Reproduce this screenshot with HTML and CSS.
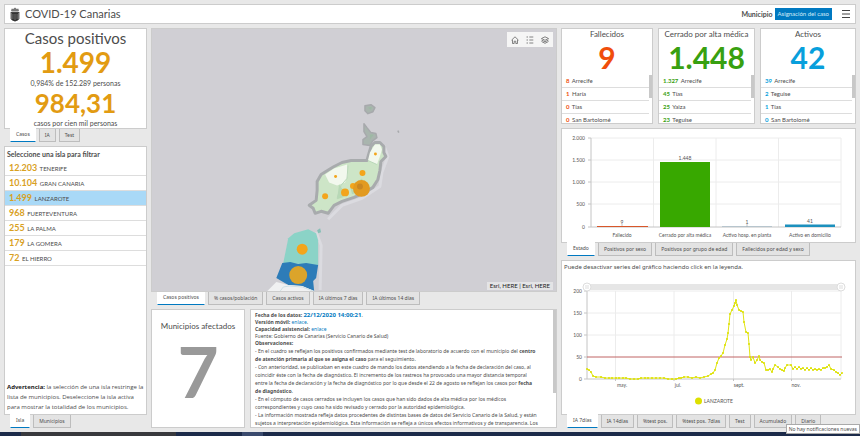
FILE: index.html
```html
<!DOCTYPE html>
<html lang="es">
<head>
<meta charset="utf-8">
<meta name="viewport" content="width=device-width, initial-scale=1">
<title>COVID-19 Canarias</title>
<link rel="stylesheet" href="styles.css">
</head>
<body>
<div class="app">
  <header class="header">
    <svg class="logo" viewBox="0 0 10 15" aria-hidden="true">
      <path d="M1 3.6 1.8 1.6 3.2 2 5 .4 6.8 2 8.2 1.6 9 3.6 8.3 4.4H1.7Z" fill="#777"/>
      <path d="M.6 5h8.8v1H.6z" fill="#444"/>
      <path d="M1.3 6h7.4v6.3Q8.500 13.800 5 14.600 1.500 13.800 1.300 12.300Z" fill="#333"/>
      <path d="M2.900 7v5M5 7v6M7.100 7v5" stroke="#888" stroke-width=".7"/>
      <path d="M.6 6v6M9.400 6v6" stroke="#777" stroke-width=".6"/>
    </svg>
    <h1>COVID-19 Canarias</h1>
    <span class="filter-label">Municipio</span>
    <button class="filter">Asignación del caso</button>
    <button class="menu" aria-label="Menú">
      <svg viewBox="0 0 8 8"><path d="M0 .5h8M0 4h8M0 7.500h8" stroke="#444" stroke-width="1"/></svg>
    </button>
  </header>

  <main class="columns">
    <div class="column">
      <section>
        <div class="card cases">
          <h2>Casos positivos</h2>
          <strong class="total">1.499</strong>
          <p>0,984% de 152.289 personas</p>
          <strong class="rate">984,31</strong>
          <p>casos por cien mil personas</p>
        </div>
        <nav class="tabs"><button class="active">Casos</button><button>IA</button><button>Test</button></nav>
      </section>
      <section class="grow">
        <div class="card islands">
          <h3>Seleccione una isla para filtrar</h3>
          <ul>
            <li><b>12.203</b> TENERIFE</li>
            <li><b>10.104</b> GRAN CANARIA</li>
            <li class="selected"><b>1.499</b> LANZAROTE</li>
            <li><b>968</b> FUERTEVENTURA</li>
            <li><b>255</b> LA PALMA</li>
            <li><b>179</b> LA GOMERA</li>
            <li><b>72</b> EL HIERRO</li>
          </ul>
          <p class="warning"><b>Advertencia:</b> la selección de una isla restringe la<br>lista de municipios. Deseleccione la isla activa<br>para mostrar la totalidad de los municipios.</p>
        </div>
        <nav class="tabs"><button class="active">Isla</button><button>Municipios</button></nav>
      </section>
    </div>

    <div class="column">
      <section class="grow">
        <div class="map">
          <svg class="map-canvas" viewBox="151 28 406 263" preserveAspectRatio="xMidYMax slice" role="img" aria-label="Mapa de casos por municipio">
            <g fill="none" stroke="#dbdbe0" stroke-width="3" stroke-linejoin="round">
              <path d="M384 145 388 156 382 172 380 186 362 198 342 205 328 219M316 232 321 245 320 290"/>
            </g>
            <g fill="#a9b5ae" stroke="#a7a9ac" stroke-width="1.500" stroke-linejoin="round">
              <path d="M365 105 371 104 375 107 373 111 368 113 365 110Z"/>
              <path d="M364 123 367 127 371 132 376 133 377 137 373 140 370 145 363 144 363 139 367 136 364 131Z"/>
              <path d="M398 130 399 132"/>
            </g>
            <path d="M368 107 372 106 371 109ZM370 134 374 134 370 139Z" fill="#9db9a4"/>
            <path d="M375 142 380 142 384 146 384 152 386 156 381 161 380 170 378 179 373 187 363 193 354 197 342 201 334 205 328 213 321 211 315 213 313 208 309 205 316 200 317 190 317 181 321 174 329 169 334 166 342 162 351 160 360 160 367 160 369 153 371 146Z" fill="#cde5c7" stroke="#a8abad" stroke-width="3" stroke-linejoin="round"/>
            <path d="M375 144 380 144 382 149 380 156 377 164 368 160 370 152ZM325 174 334 168 347 164 348 174 345 182 337 185 329 182Z" fill="#f2f8ee"/>
            <path d="M339 184 345 192 343 197 337 199ZM350 186 362 178 367 189 352 194Z" fill="#b7d9b5"/>
            <path d="M348 165 347 178 341 185 337 198M377 164 368 160" fill="none" stroke="#b9d7b9" stroke-width="1"/>
            <path d="M317 230 320 228 321 232 318 233Z" fill="#87bfb6"/>
            <path d="M288 238 294 233 308 229 316 233 318 240 318 265 283 263Z" fill="#8bd3c7"/>
            <path d="M282 263 290 262 298 264 306 263 318 265 316 278 313 281 314 291 302 286 288 285 276 278Z" fill="#2d7cb8"/>
            <path d="M267 291 276 282 288 285 302 286 314 291Z" fill="#f0f1f2"/>
            <path d="M280 291 283 287 289 286 302 287 313 291" fill="none" stroke="#cfe0e4" stroke-width="1"/>
            <g fill="#f3a51c">
              <circle cx="375.500" cy="153.500" r="1.500"/><circle cx="335.500" cy="176" r="1.500"/>
              <circle cx="362.500" cy="172.500" r="3"/><circle cx="325" cy="196" r="3"/>
              <circle cx="345" cy="192" r="4"/><circle cx="353" cy="185.500" r="3"/>
              <circle cx="361.500" cy="188" r="8.500" fill="#e29a20"/><circle cx="360" cy="186" r="3" fill="#c98722"/>
              <circle cx="302" cy="249" r="5.500"/><circle cx="298" cy="275" r="9" fill="#dba42b"/>
            </g>
          </svg>
          <div class="map-tools">
            <button aria-label="Inicio"><svg viewBox="0 0 8 8"><path d="M.5 4.200 4 .8l3.500 3.400M1.500 3.800v3.700h1.700V5.200h1.600v2.300h1.700V3.800" /></svg></button>
            <button aria-label="Leyenda"><svg viewBox="0 0 8 8"><path d="M.5 1h1.500M3.300 1h4M.5 4h1.500M3.300 4h4M.5 7h1.500M3.300 7h4"/></svg></button>
            <button aria-label="Capas"><svg viewBox="0 0 8 8"><path d="M4 .8 7.500 2.500 4 4.300.5 2.500ZM.5 4 4 5.800 7.500 4M.5 5.500 4 7.300 7.500 5.500"/></svg></button>
          </div>
          <small class="attribution">Esri, HERE | Esri, HERE</small>
        </div>
        <nav class="tabs"><button class="active">Casos positivos</button><button>% casos/población</button><button>Casos activos</button><button>IA últimos 7 días</button><button>IA últimos 14 días</button></nav>
      </section>
      <section class="details">
        <div class="card towns">
          <h3>Municipios afectados</h3>
          <strong>7</strong>
        </div>
        <div class="card notes">
          <div class="notes-text">
            <div class="source">
              <p><b>Fecha de los datos: <span class="date">22/12/2020 14:00:21</span></b>.</p>
              <p><b>Versión móvil:</b> <a href="#">enlace</a>.</p>
              <p><b>Capacidad asistencial:</b> <a href="#">enlace</a></p>
              <p>Fuente: Gobierno de Canarias (Servicio Canario de Salud)</p>
              <p><b>Observaciones:</b></p>
            </div>
            <p>- En el cuadro se reflejan los positivos confirmados mediante test de laboratorio de acuerdo con el municipio del <b>centro<br>de atención primaria al que se asigna el caso</b> para el seguimiento.</p>
            <p>- Con anterioridad, se publicaban en este cuadro de mando los datos atendiendo a la fecha de declaración del caso, al<br>coincidir éste con la fecha de diagnóstico. El incremento de los rastreos ha provocado una mayor distancia temporal<br>entre la fecha de declaración y la fecha de diagnóstico por lo que desde el 22 de agosto se reflejan los casos por <b>fecha<br>de diagnóstico</b>.</p>
            <p>- En el cómputo de casos cerrados se incluyen los casos que han sido dados de alta médica por los médicos<br>correspondientes y cuyo caso ha sido revisado y cerrado por la autoridad epidemiológica.</p>
            <p>- La información mostrada refleja datos procedentes de distintas bases de datos del Servicio Canario de la Salud, y están<br>sujetos a interpretación epidemiológica. Esta información se refleja a únicos efectos informativos y de transparencia. Los</p>
          </div>
          <span class="scroll"></span>
        </div>
      </section>
    </div>

    <div class="column">
      <section class="stats">
        <div class="card stat deaths">
          <h3>Fallecidos</h3><strong>9</strong>
          <div class="scroll-list">
            <ul><li><b>8</b> Arrecife</li><li><b>1</b> Haría</li><li><b>0</b> Tías</li><li><b>0</b> San Bartolomé</li></ul>
            <span class="scroll"></span>
          </div>
        </div>
        <div class="card stat closed">
          <h3>Cerrado por alta médica</h3><strong>1.448</strong>
          <div class="scroll-list">
            <ul><li><b>1.327</b> Arrecife</li><li><b>45</b> Tías</li><li><b>25</b> Yaiza</li><li><b>23</b> Teguise</li></ul>
            <span class="scroll"></span>
          </div>
        </div>
        <div class="card stat open">
          <h3>Activos</h3><strong>42</strong>
          <div class="scroll-list">
            <ul><li><b>39</b> Arrecife</li><li><b>2</b> Teguise</li><li><b>1</b> Tías</li><li><b>0</b> San Bartolomé</li></ul>
            <span class="scroll"></span>
          </div>
        </div>
      </section>
      <section>
        <div class="card">
          <svg class="chart" viewBox="562 129 293 113" role="img" aria-label="Casos por estado">
            <path class="grid" d="M591 138H841M591 160H841M591 182H841M591 204H841M653.500 138V227M716 138V227M778.500 138V227M841 138V227"/>
            <path class="axis" d="M591 138V227M588 138h3M588 160h3M588 182h3M588 204h3M588 227H841M622 224v3M747 224v3"/>
            <path d="M597 226h51v1h-51z" fill="#d8572a"/>
            <path d="M660 162h50v65h-50z" fill="#38a800"/>
            <path d="M722 226.500h50v.5h-50z" fill="#8ba8b8"/>
            <path d="M785 224.500h50v2.500h-50z" fill="#1c90bd"/>
            <g class="end"><text x="585" y="140">2.000</text><text x="585" y="162">1.500</text><text x="585" y="184">1.000</text><text x="585" y="206">500</text><text x="585" y="229">0</text></g>
            <g class="middle">
              <text x="622" y="224">9</text><text x="685" y="160">1.448</text><text x="747" y="224">1</text><text x="810" y="223">41</text>
              <text x="622" y="237">Fallecido</text><text x="685" y="237">Cerrado por alta médica</text><text x="747" y="237">Activo hosp. en planta</text><text x="810" y="237">Activo en domicilio</text>
            </g>
          </svg>
        </div>
        <nav class="tabs"><button class="active">Estado</button><button>Positivos por sexo</button><button>Positivos por grupo de edad</button><button>Fallecidos por edad y sexo</button></nav>
      </section>
      <section class="grow">
        <div class="card trend">
          <p>Puede desactivar series del gráfico haciendo click en la leyenda.</p>
          <svg class="chart" viewBox="562 276 293 138" role="img" aria-label="Incidencia acumulada a 7 días en Lanzarote">
            <marker id="dot" viewBox="0 0 2 2" refX="1" refY="1" markerWidth="2" markerHeight="2" markerUnits="userSpaceOnUse"><circle cx="1" cy="1" r="1" fill="#dde000"/></marker>
            <path d="M587 285h255v6H587z" fill="#e6e6e6"/>
            <path class="grid" d="M587 292H841M587 314H841M587 336H841M615.500 292V380M674 292V380M733.500 292V380M791.500 292V380M841 292V380"/>
            <path class="axis" d="M587 292V380M584 292h3M584 314h3M584 336h3M584 358h3M584 380H841M615.500 380v2M674 380v2M733.500 380v2M791.500 380v2"/>
            <path d="M587 358H842" stroke="#c06464" stroke-width="1"/>
            <polyline class="series" points="587,370 589,371 591,373 593,377 596,378 601,378 605,379 609,379 612,379 616,379 619,379 623,379 626,379 630,380 634,380 638,380 641,379 645,379 648,379 652,379 656,379 660,379 664,379 668,380 672,380 676,380 679,379 681,379 684,378 688,378 692,379 696,378 700,379 704,378 708,377 711,375 713,374 715,371 717,364 719,359 721,357 723,354 725,346 727,340 728,334 729,325 730,315 732,311 734,307 735,304 736,301 737,306 739,311 741,312 743,313 744,323 746,333 748,334 749,345 750,358 751,361 753,358 755,364 757,361 759,357 760,361 762,363 764,364 766,371 768,371 770,370 772,373 773,370 775,366 778,368 780,370 782,371 784,372 785,369 787,366 791,366 793,370 795,368 797,370 799,368 801,370 803,369 805,371 807,369 809,371 811,369 813,371 815,370 817,371 819,370 821,371 823,369 825,369 827,368 829,366 831,370 834,371 836,373 838,374 840,376 842,374"/>
            <g class="handle"><circle cx="587" cy="288" r="4"/><circle cx="841" cy="288" r="4"/><path d="M586 286v4M588 286v4M840 286v4M842 286v4"/></g>
            <g class="end"><text x="582" y="294">200</text><text x="582" y="316">150</text><text x="582" y="338">100</text><text x="582" y="360">50</text><text x="582" y="382">0</text></g>
            <g class="middle"><text x="622" y="388">may.</text><text x="678" y="388">jul.</text><text x="739" y="388">sept.</text><text x="796" y="388">nov.</text></g>
            <circle cx="698.500" cy="402" r="3.500" fill="#dde000"/>
            <text x="704" y="404">LANZAROTE</text>
          </svg>
        </div>
        <nav class="tabs"><button class="active">IA 7días</button><button>IA 14días</button><button>%test pos.</button><button>%test pos. 7días</button><button>Test</button><button>Acumulado</button><button>Diario</button></nav>
      </section>
    </div>
  </main>
  <footer class="taskbar"><span class="pinned"></span><span class="running"></span></footer>
  <div class="tooltip" role="tooltip">No hay notificaciones nuevas</div>
</div>
</body>
</html>
```
FILE: styles.css
```css
* { box-sizing: border-box; }
body { margin: 0; font-family: Lato, sans-serif; font-size: 7px; line-height: 8px; color: #4c4c4c; background: #e8e8e8; }
h1, h2, h3, p, ul { margin: 0; padding: 0; font-weight: 400; list-style: none; }
button { font: inherit; color: inherit; margin: 0; padding: 0; border: 0; background: none; }
a { color: #0079c1; text-decoration: none; }
.app { position: relative; min-height: 100vh; display: flex; flex-direction: column; }

.header { margin: 4px 4px 0; height: 20px; display: flex; align-items: center; background: #fff; border: 1px solid #ccc; padding: 0 5px; }
.logo { width: 10px; height: 15px; margin-right: 5px; }
.header h1 { flex: 1; font-size: 11px; line-height: 18px; }
.filter-label { font-weight: 700; margin-right: 2px; }
.filter { height: 12px; padding: 0 3px; background: #0079c1; color: #d5ebf8; font-size: 6px; }
.menu { margin-left: 10px; width: 8px; height: 8px; }
.menu svg { display: block; width: 100%; height: 100%; }

.columns { flex: 1; display: grid; grid-template-columns: minmax(0, 143fr) minmax(0, 406fr) minmax(0, 295fr); gap: 4px; padding: 4px; }
.column { display: flex; flex-direction: column; gap: 4px; min-width: 0; }
.grow { flex: 1; display: flex; flex-direction: column; }
.grow > .card, .grow > .map { flex: 1; }
.card { background: #fff; border: 1px solid #ccc; min-width: 0; }

.tabs { display: flex; gap: 3px; padding-left: 6px; }
.tabs button { height: 13px; padding: 0 5px; font-family: "Noto Sans", sans-serif; font-size: 5px; line-height: 11px; white-space: nowrap; background: #e3e3e3; border: 1px solid #bdbdbd; border-top: 0; }
.tabs .active { background: #fff; border-color: #fff; border-bottom-color: #0079c1; margin-top: -1px; height: 14px; }

.cases { height: 101px; overflow: hidden; text-align: center; }
.cases h2 { font-size: 15px; line-height: 18px; }
.cases strong { display: block; color: #e29b12; }
.cases p { line-height: 10px; }
.cases .total { font-size: 28px; line-height: 31px; }
.cases .rate { font-size: 26px; line-height: 30px; }

.islands { display: flex; flex-direction: column; font-size: 6px; }
.islands h3 { padding: 3px 2px 2px; font-weight: 700; line-height: 9px; }
.islands li { height: 15px; line-height: 14px; padding-left: 4px; border-bottom: 1px solid #ddd; }
.islands li b { color: #d9a11f; font-size: 9px; margin-right: 1px; }
.islands .selected { background: #a9d9f7; }
.warning { margin-top: auto; padding: 2px 0 2px 2px; font-family: "Open Sans", sans-serif; line-height: 10px; white-space: nowrap; }
.warning b { color: #222; }

.map { position: relative; background: #d0cfd4; border: 1px solid #ccc; overflow: hidden; min-height: 100px; }
.map-canvas { position: absolute; inset: 0; width: 100%; height: 100%; }
.map-tools { position: absolute; top: 3px; right: 3px; height: 15px; padding: 0 4px; display: flex; align-items: center; gap: 7px; background: #f5f5f5; }
.map-tools button { width: 8px; height: 8px; }
.map-tools svg { display: block; fill: none; stroke: #666; stroke-width: .8; }
.attribution { position: absolute; right: 3px; bottom: 1px; padding: 0 3px; background: #e4e4e6; font-size: 6px; line-height: 8px; color: #222; }

.details { height: 119px; display: grid; grid-template-columns: 94fr 307fr; gap: 5px; }
.towns { display: flex; flex-direction: column; text-align: center; }
.towns h3 { font-size: 8px; line-height: 10px; padding-top: 11px; }
.towns strong { color: #999; font-size: 71px; line-height: 80px; }
.notes { display: flex; overflow: hidden; font-family: "Noto Sans", sans-serif; font-size: 5px; line-height: 8px; }
.notes-text { flex: 1; padding: 2px 4px 0; white-space: nowrap; overflow: hidden; }
.source { line-height: 7px; }
.date { color: #0079c1; font-size: 6px; }
.scroll { width: 3px; background: #c8c8c8; }
.notes .scroll { height: 83px; }

.stats { display: grid; grid-template-columns: 92fr 97fr 96fr; gap: 5px; height: 96px; }
.stat { display: flex; flex-direction: column; overflow: hidden; }
.stat h3 { font-size: 8px; line-height: 10px; text-align: center; white-space: nowrap; overflow: hidden; }
.stat > strong { font-size: 30px; line-height: 36px; text-align: center; }
.scroll-list { flex: 1; display: flex; overflow: hidden; }
.scroll-list ul { flex: 1; }
.scroll-list .scroll { height: 23px; }
.stat li { height: 13px; line-height: 12px; padding-left: 4px; border-bottom: 1px solid #ddd; white-space: nowrap; font-size: 6px; }
.stat b { margin-right: 1px; }
.deaths b, .deaths strong { color: #f04e0b; }
.closed b, .closed strong { color: #38a010; }
.open b, .open strong { color: #089fdc; }

.chart { display: block; width: 100%; height: auto; font-size: 5px; fill: #555; }
.grid { fill: none; stroke: #ececec; stroke-width: 1; }
.axis { fill: none; stroke: #c4c4c4; stroke-width: 1; }
.end { text-anchor: end; }
.middle { text-anchor: middle; }
.series { fill: none; stroke: #e0e414; stroke-width: 1; stroke-linejoin: round; marker: url(#dot); }
.handle { fill: #fff; stroke: #ddd; stroke-width: 1; }
.trend p { padding: 2px 2px 4px; font-family: "Noto Sans", sans-serif; font-size: 6px; line-height: 8px; }

.taskbar { height: 4px; display: flex; background: #1c2b4a; }
.pinned { width: 18%; margin-left: 21px; background: #38393d; }
.running { width: 21px; margin-left: 66px; background: #3a4a6d; }
.tooltip { position: absolute; right: 0; bottom: 2px; padding: 0 2px; background: #fff; border: 1px solid #aaa; font-family: "Noto Sans", sans-serif; font-size: 5px; line-height: 8px; }
```
